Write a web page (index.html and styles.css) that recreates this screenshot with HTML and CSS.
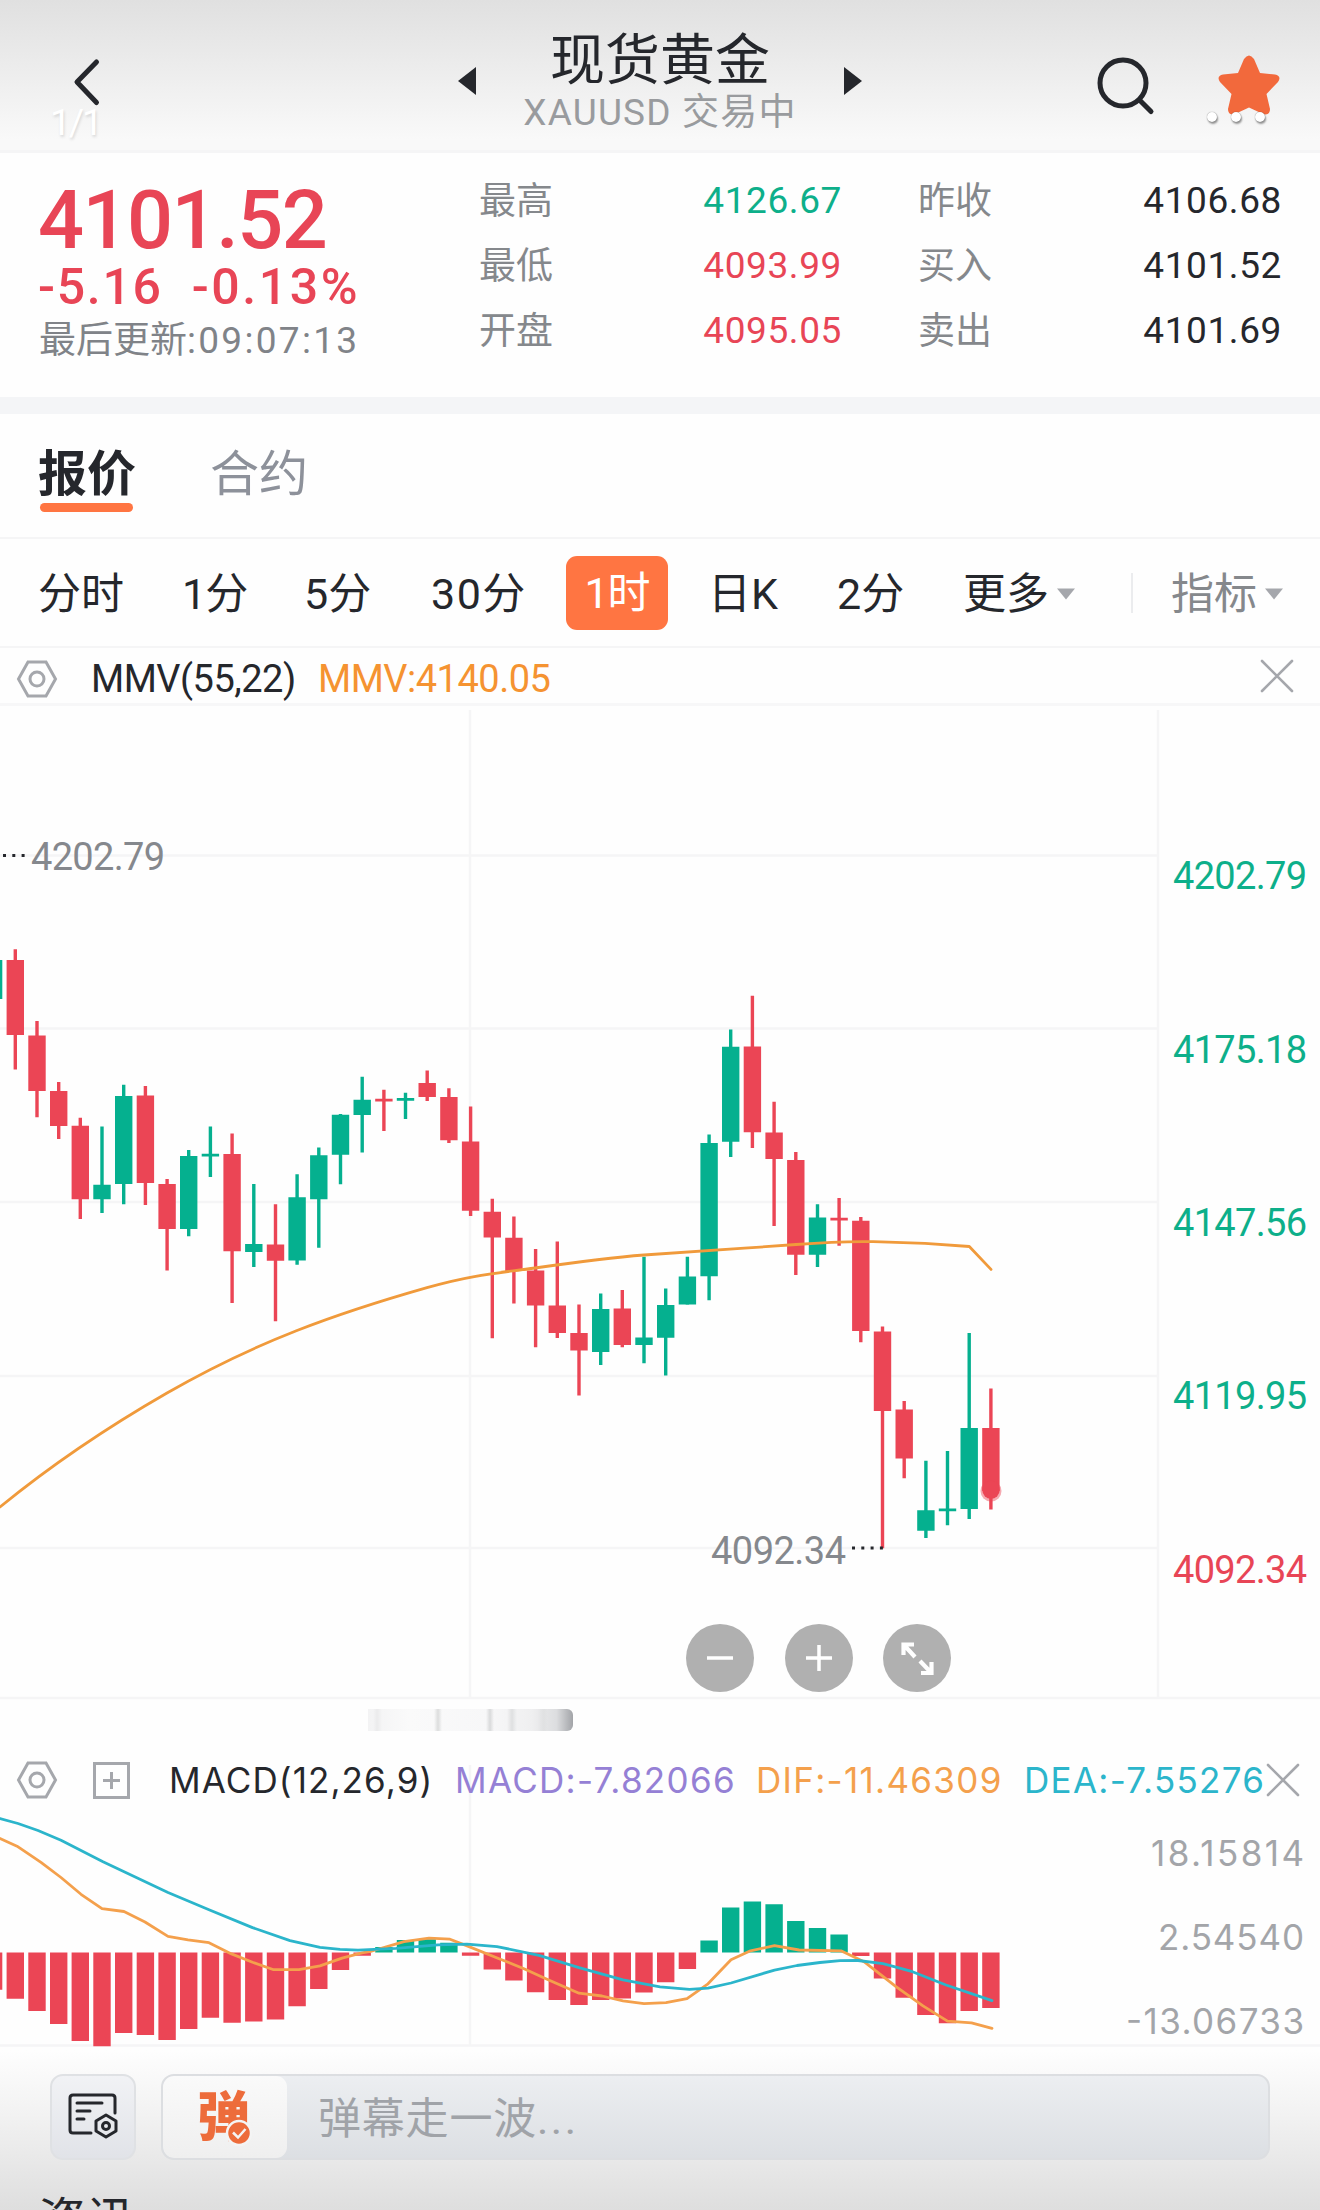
FILE: index.html
```html
<!DOCTYPE html>
<html lang="zh-CN">
<head>
<meta charset="utf-8">
<title>现货黄金 XAUUSD</title>
<link rel="stylesheet" href="styles.css">
</head>
<body>
<div class="page">
  <header class="header">
    <svg class="back" viewBox="0 0 34 60"><path d="M26.500 10L7 30L26.500 50.500"/></svg>
    <div class="instrument">
      <svg class="tri" viewBox="0 0 18 28"><path d="M18 0V28L0 14z"/></svg>
      <div class="names"><h1>现货黄金</h1><p>XAUUSD 交易中</p></div>
      <svg class="tri" viewBox="0 0 18 28"><path d="M0 0V28L18 14z"/></svg>
    </div>
    <div class="tools">
      <svg class="search" viewBox="0 0 60 60"><circle cx="27" cy="27" r="23"/><path d="M43.500 44L55 55.500"/></svg>
      <svg class="star" viewBox="0 0 62 62"><path d="M26 5Q31-2 36 5L42 19L57 20.500Q64 22 60 28L48.500 40L52 55Q52 62 45 60L31 53.500L17 60Q10 62 10 55L13.500 40L2 28Q-2 22 5 20.500L20 19z"/></svg>
    </div>
    <span class="counter">1/1</span>
    <span class="dots"><i></i><i></i><i></i></span>
  </header>

  <section class="quote">
    <div class="last">
      <div class="price">4101.52</div>
      <div class="change"><span>-5.16</span><span class="percent">-0.13%</span></div>
      <div class="updated">最后更新<b>:09:07:13</b></div>
    </div>
    <dl class="stats">
      <dt>最高</dt><dd class="up">4126.67</dd><dt>昨收</dt><dd>4106.68</dd>
      <dt>最低</dt><dd class="down">4093.99</dd><dt>买入</dt><dd>4101.52</dd>
      <dt>开盘</dt><dd class="down">4095.05</dd><dt>卖出</dt><dd>4101.69</dd>
    </dl>
  </section>

  <nav class="tabs"><span class="tab active">报价</span><span class="tab">合约</span></nav>

  <nav class="periods">
    <span class="p1">分时</span><span class="p2">1分</span><span class="p3">5分</span><span class="p4">30分</span>
    <span class="selected">1时</span><span class="p5">日K</span><span class="p6">2分</span>
    <span class="p7">更多<svg class="caret" viewBox="0 0 18 11"><path d="M0 0H18L9 11z"/></svg></span>
    <span class="p8">指标<svg class="caret" viewBox="0 0 18 11"><path d="M0 0H18L9 11z"/></svg></span>
  </nav>

  <div class="indicator">
    <svg class="hex" viewBox="0 0 40 38"><path d="M11 2H29L38.500 19L29 36H11L1.500 19z"/><circle cx="20" cy="19" r="7"/></svg>
    <span class="mmv-name">MMV(55,22)</span><span class="mmv-value">MMV:4140.05</span>
    <svg class="close" viewBox="0 0 32 32"><path d="M1 1L31 31M31 1L1 31"/></svg>
  </div>

  <div class="chart">
    <svg class="plot" viewBox="0 706 1320 994">
      <path class="grid" d="M0 855.500H1158M0 1028.500H1158M0 1202H1158M0 1376H1158M0 1548H1158M470 710V1698M1158 710V1698M0 1698H1320"/>
      <path class="wick g" d="M102 1126.500V1213M123.700 1084.800V1204.200M188.700 1149.900V1236.300M210.400 1126.500V1177M253.800 1183.900V1267M297.100 1174.300V1264.700M318.800 1147.600V1247.800M340.500 1113.900V1184.300M362.200 1076.800V1152.500M405.500 1092.800V1118.900M600.700 1293.600V1365.100M644 1256.800V1363.200M665.700 1288.400V1375.400M687.400 1256.800V1304.600M709.100 1134.600V1300.300M730.700 1029.400V1157.100M817.500 1204.200V1267.100M925.900 1460.800V1537.900M947.500 1450.900V1525.300M969.200 1333.100V1519"/>
      <path class="body g" d="M-6.400 960V999M102 1184.700V1199.200M123.700 1095.900V1183.900M188.700 1156V1229.100M210.400 1153.800V1156.600M253.800 1244V1252M297.100 1197.300V1260.400M318.800 1155.200V1199.200M340.500 1114.700V1154.800M362.200 1099.700V1115M405.500 1098V1100.800M600.700 1309V1352.100M644 1337.500V1345M665.700 1305V1337.800M687.400 1276.600V1304.600M709.100 1142.900V1276.200M730.700 1046.800V1141.700M817.500 1217.600V1254.800M925.900 1510.200V1530.800M947.500 1508.500V1511.300M969.200 1428V1509.100"/>
      <path class="wick r" d="M15.300 949.300V1069.500M37 1020.900V1117.300M58.700 1082.100V1139.100M80.300 1117.700V1219.100M145.400 1086V1205M167.100 1178.900V1270.400M232.100 1133.400V1302.900M275.500 1204.200V1321.300M383.900 1089.800V1131.100M427.200 1070.600V1100.900M448.900 1088.200V1143M470.600 1106.600V1216M492.300 1198.700V1338.200M513.900 1216.500V1303.400M535.600 1248.900V1347.300M557.300 1241.400V1337.900M579 1304.600V1395.600M622.300 1290V1347.300M752.400 995.800V1148.100M774.100 1101.800V1225.900M795.800 1152V1275M839.100 1197.900V1245.700M860.800 1216.900V1342.200M882.500 1326.400V1548.200M904.200 1401.100V1478.200M990.900 1388.500V1509.500"/>
      <path class="body r" d="M15.300 960V1035M37 1035.400V1091M58.700 1091V1126.100M80.300 1125.700V1199.200M145.400 1095.500V1183.100M167.100 1183.900V1229.100M232.100 1154V1251.300M275.500 1244.400V1260.800M383.900 1098.800V1101.600M427.200 1082.900V1097M448.900 1097V1140.300M470.600 1141.400V1210.700M492.300 1211.700V1237.400M513.900 1237.800V1271M535.600 1270.600V1305.400M557.300 1305.400V1333.100M579 1333.100V1350.500M622.300 1308.600V1345M752.400 1046.400V1132.200M774.100 1132.600V1159.100M795.800 1159.900V1254.800M839.100 1217.800V1220.600M860.800 1220.800V1331.100M882.500 1331.500V1411M904.200 1409.400V1458.500M990.900 1428V1491"/>
      <circle class="pulse" cx="991" cy="1491" r="10.500"/><circle class="pulse-core" cx="991" cy="1490" r="8.700"/>
      <path class="line mmv" d="M0 1507C60 1458 120 1420 167 1393S260 1345 297 1330.500S380 1301 427 1287.600S500 1273 535 1268S605 1258 644 1255S745 1248.500 796 1244.500S860 1241.500 881 1241.800L925 1243.300L969.300 1246.500L991 1269.400"/>
      <path class="leader" d="M3 855.500H26M852 1548H884"/>
      <text class="mark" x="31" y="870" textLength="134">4202.79</text>
      <text class="mark" x="711" y="1564" textLength="135">4092.34</text>
      <g class="scale">
        <text x="1173" y="889" textLength="134">4202.79</text><text x="1173" y="1062.500" textLength="134">4175.18</text>
        <text x="1173" y="1236" textLength="134">4147.56</text><text x="1173" y="1409" textLength="134">4119.95</text>
        <text class="low" x="1173" y="1583" textLength="134">4092.34</text>
      </g>
    </svg>
    <div class="zoom-controls">
      <svg viewBox="0 0 68 68"><circle cx="34" cy="34" r="34"/><path d="M21 34H47"/></svg>
      <svg viewBox="0 0 68 68"><circle cx="34" cy="34" r="34"/><path d="M21 34H47M34 21V47"/></svg>
      <svg class="expand" viewBox="0 0 68 68"><circle cx="34" cy="34" r="34"/><path d="M32 33L21 21M20.500 31V20.500H31M37 37L48 48.500M48.500 38V49H38"/></svg>
    </div>
  </div>

  <div class="scrub"><i></i></div>

  <div class="macd-head">
    <svg class="hex" viewBox="0 0 40 38"><path d="M11 2H29L38.500 19L29 36H11L1.500 19z"/><circle cx="20" cy="19" r="7"/></svg>
    <svg class="add" viewBox="0 0 37 37"><path d="M1.500 1.500H35.500V35.500H1.500zM10 18.500H27M18.500 10V27"/></svg>
    <span class="m-name">MACD(12,26,9)</span><span class="m-macd">MACD:-7.82066</span><span class="m-dif">DIF:-11.46309</span><span class="m-dea">DEA:-7.55276</span>
    <svg class="close" viewBox="0 0 32 32"><path d="M1 1L31 31M31 1L1 31"/></svg>
  </div>

  <svg class="macd" viewBox="0 1805 1320 245">
    <path class="grid" d="M470 1765V2045M0 2045.500H1320"/>
    <path class="body r" d="M-6.400 1952.500V1989.700M15.300 1952.500V1998.800M37 1952.500V2011.100M58.700 1952.500V2024.100M80.300 1952.500V2040.900M102 1952.500V2046.200M123.700 1952.500V2032.900M145.400 1952.500V2035M167.100 1952.500V2039.900M188.700 1952.500V2029M210.400 1952.500V2017.800M232.100 1952.500V2022.700M253.800 1952.500V2021.600M275.500 1952.500V2019.500M297.100 1952.500V2006.200M318.800 1952.500V1989M340.500 1952.500V1970M362.200 1952.500V1955.700M470.600 1952.500V1955.700M492.300 1952.500V1969.400M513.900 1952.500V1980.600M535.600 1952.500V1992.200M557.300 1952.500V1999.900M579 1952.500V2005.100M600.700 1952.500V1999.900M622.300 1952.500V1998.500M644 1952.500V1992.500M665.700 1952.500V1982.200M687.400 1952.500V1968.900M860.800 1952.500V1956M882.500 1952.500V1978.600M904.200 1952.500V1997.800M925.900 1952.500V2015.100M947.500 1952.500V2023.200M969.200 1952.500V2011.100M990.900 1952.500V2007.900"/>
    <path class="body g" d="M383.900 1952.500V1947M405.500 1952.500V1940M427.200 1952.500V1939.200M448.900 1952.500V1942.700M709.100 1952.500V1940.400M730.700 1952.500V1907.400M752.400 1952.500V1901.400M774.100 1952.500V1904.200M795.800 1952.500V1921.100M817.500 1952.500V1927.900M839.100 1952.500V1934.400"/>
    <polyline class="line dif" points="0,1838.5 17,1846.2 41,1862.4 61,1877.5 81,1894.3 102,1908.7 124,1911.5 145,1922 168,1936.4 188,1939.9 209,1942.7 231.5,1953.9 252.5,1962.3 273.6,1969.7 299,1969.7 320,1965.9 342,1958.1 362,1952.9 372,1951 404,1941.7 429,1938.1 450,1939.2 469,1946.6 501,1959.5 524,1968.7 547,1979.2 579,1993.2 602,1996 623,2000.9 644,2003.7 666,2002.7 687,1998.6 708,1983.8 731,1959.7 750.5,1950.8 774.5,1945.6 799,1950 841,1950.8 864,1961.7 896,1986.6 923,2005.9 947.5,2021.1 971.5,2022.8 992,2028.4"/>
    <polyline class="line dea" points="0,1818.5 18,1823.5 38,1830.5 61,1840.3 103,1861.7 168,1892.5 209,1909.7 252.5,1927.6 290,1940.6 320,1947.3 340,1949.3 358,1950.1 396,1948.3 438,1944.8 467,1944.1 497,1946.6 539,1955.3 579,1967.6 623,1979.9 660,1986.9 689.5,1989.4 708,1988.2 731,1983 774.5,1970.1 797,1965.5 820,1962.5 840,1960.7 858,1960.5 883,1963.7 912.5,1971.7 946,1985 992,2000.6"/>
    <g class="macd-scale">
      <text x="1151" y="1866" textLength="153">18.15814</text><text x="1158" y="1950" textLength="146">2.54540</text><text x="1126" y="2034" textLength="178">-13.06733</text>
    </g>
  </svg>

  <footer class="footer">
    <div class="composer">
      <div class="panel-button">
        <svg viewBox="0 0 50 46"><path d="M23 40H5Q2 40 2 37V5Q2 2 5 2H44Q47 2 47 5V20"/><path d="M9 10H34M9 18H22M9 26H16"/><path d="M38 22L48 28V38L38 44L28 38V28z"/><circle cx="38" cy="33" r="3.500"/></svg>
      </div>
      <div class="message">
        <div class="toggle"><span>弹</span><svg viewBox="0 0 26 26"><circle cx="13" cy="13" r="12"/><path d="M7 12.500L12 17.500L19.500 9"/></svg></div>
        <span class="placeholder">弹幕走一波<span>...</span></span>
      </div>
    </div>
    <h2>资讯</h2>
  </footer>
</div>
</body>
</html>
```
FILE: styles.css
```css
* { box-sizing: border-box; }
body { margin: 0; font-family: Roboto, "Noto Sans CJK SC", sans-serif; color: #25272c; background: #fff; }
svg { display: block; flex: none; overflow: visible; fill: none; }
.page { width: 1320px; height: 2210px; overflow: hidden; display: flex; flex-direction: column; background: #fefefe; }

.header { position: relative; flex: none; height: 153px; display: grid; grid-template-columns: 430px 460px 430px; background: linear-gradient(#e0e0e0, #f9f9f9 93%); border-bottom: 3px solid #f5f5f6; }
.back { width: 34px; height: 60px; margin: 52px 0 0 70px; stroke: #25272c; stroke-width: 5; stroke-linecap: round; stroke-linejoin: round; }
.instrument { display: flex; justify-content: space-between; padding: 0 28px; }
.tri { width: 18px; height: 28px; margin-top: 67px; fill: #25272c; }
.names { text-align: center; white-space: nowrap; }
.names h1 { margin: 26px 0 0; font-size: 55px; line-height: 68px; font-weight: 400; }
.names p { margin: 0; font-size: 37px; line-height: 38px; font-weight: 400; color: #999b9e; letter-spacing: 1.2px; }
.tools { display: flex; gap: 62px; padding: 56px 0 0 206px; }
.search { width: 60px; height: 60px; stroke: #25272c; stroke-width: 5; stroke-linecap: round; }
.star { width: 62px; height: 62px; margin-top: -2px; fill: #f2693c; }
.counter { position: absolute; left: 50px; top: 101px; color: #fff; font-size: 37px; line-height: 44px; font-weight: 400; letter-spacing: -2px; text-shadow: 1px 2px 3px #0002; }
.dots { position: absolute; left: 1207px; top: 112px; display: flex; gap: 14px; }
.dots i { width: 10px; height: 10px; border-radius: 50%; background: #fff; box-shadow: 1px 2px 2px #0006, 0 0 1px #0008; }

.quote { flex: none; height: 261px; padding: 25px 38px 0 39px; display: flex; border-bottom: 17px solid #f4f5f7; }
.last { width: 440px; color: #e84556; }
.price { font-size: 81px; line-height: 86px; font-weight: 500; letter-spacing: -1.5px; margin-left: -1px; }
.change { display: flex; gap: 29px; font-size: 50px; line-height: 46px; font-weight: 500; margin-left: -1px; letter-spacing: 1.7px; }
.percent { letter-spacing: 2.6px; }
.updated { font-size: 37px; line-height: 46px; color: #808388; margin-top: 8px; white-space: nowrap; }
.updated b { font-weight: 400; letter-spacing: 2.3px; }
.stats { margin: 0; width: 803px; display: grid; grid-template-columns: 122px 241px 76px 1fr; grid-auto-rows: 65px; align-content: start; font-size: 37px; line-height: 46px; }
.stats dt { color: #85888c; margin-right: -80px; padding-top: 1px; }
.stats dt:nth-of-type(even) { padding-left: 76px; }
.stats dd { margin: 0; text-align: right; letter-spacing: .6px; }
.up { color: #0daf8a; }
.down { color: #e84556; }

.tabs { flex: none; height: 125px; display: flex; gap: 74px; padding: 25px 38px 0; border-bottom: 2px solid #f5f5f6; font-size: 49px; line-height: 71px; color: #8d919a; }
.tab { height: 73px; }
.active { position: relative; color: #25272c; font-weight: 700; }
.active::after { content: ""; position: absolute; left: 2px; bottom: 0; width: 93px; height: 9px; border-radius: 5px; background: #ff7542; }

.periods { flex: none; height: 109px; display: flex; align-items: center; padding: 0 38px; border-bottom: 2px solid #f5f5f6; font-size: 43px; line-height: 62px; white-space: nowrap; }
.periods span { flex: none; padding-top: 2px; }
.p1 { width: 144px; } .p2 { width: 122px; letter-spacing: -1px; } .p3 { width: 127px; } .p4 { width: 135px; letter-spacing: 1.5px; }
.periods .selected { width: 102px; height: 74px; padding: 0; border-radius: 11px; background: #ff7542; color: #fff; line-height: 74px; text-align: center; letter-spacing: -1px; }
.p5 { margin-left: 40px; width: 129px; } .p6 { width: 126px; }
.p7, .p8 { display: flex; align-items: center; gap: 8px; }
.p7 { width: 170px; border-right: 2px solid #ebecee; height: 40px; }
.p8 { margin-left: 38px; color: #85888c; }
.caret { width: 18px; height: 12px; margin-top: 1px; fill: #a5a7ac; }

.indicator { flex: none; height: 58px; padding: 0 27px 0 17px; display: flex; align-items: center; border-bottom: 3px solid #f7f7f8; font-size: 38px; letter-spacing: -.5px; white-space: nowrap; }
.indicator span { padding-top: 6px; }
.hex { width: 40px; height: 38px; stroke: #a5a7ac; stroke-width: 3; }
.indicator .hex { margin-top: 6px; }
.mmv-name { margin-left: 34px; width: 227px; }
.mmv-value { color: #f59331; }
.close { width: 32px; height: 32px; margin-left: auto; stroke: #a5a7ac; stroke-width: 2.6; stroke-linecap: round; }

.chart { position: relative; flex: none; height: 994px; }
.plot { width: 1320px; height: 994px; overflow: hidden; }
.grid { stroke: #f5f5f6; stroke-width: 2.5; }
.wick { stroke-width: 3.4; }
.body { stroke-width: 17.4; }
.g { stroke: #05b08f; }
.r { stroke: #eb4555; }
.line { stroke-width: 2.8; stroke-linejoin: round; stroke-linecap: round; }
.mmv { stroke: #f09a3b; }
.leader { stroke: #25272c; stroke-width: 3; stroke-dasharray: 3 6.3; }
.pulse { fill: #eb4555; opacity: .45; }
.pulse-core { fill: #eb4555; }
.plot text { font-size: 38px; }
.mark { fill: #85888d; }
.scale { fill: #0daf8a; }
.scale .low { fill: #e84556; }
.zoom-controls { position: absolute; left: 686px; top: 918px; display: flex; gap: 30.5px; }
.zoom-controls svg { width: 68px; height: 68px; stroke: #fff; stroke-width: 3.5; }
.zoom-controls .expand { stroke-width: 4.2; }
.zoom-controls circle { fill: #b0b0b0; stroke: none; }

.scrub { flex: none; height: 46px; padding: 9px 0 0 368px; }
.scrub i { display: block; width: 205px; height: 22px; border-radius: 0 6px 6px 0; background: linear-gradient(90deg, transparent 5px, #ebebec 9px, transparent 14px 66px, #dcdddd 70px, transparent 74px 118px, #d9dadb 122px, transparent 126px 139px, #dfe0e1 144px, transparent 149px 170px, #e0e1e2 176px, transparent 180px), linear-gradient(90deg, #f3f3f4, #fafafa 20%, #f7f7f8 60%, #efeff0 80%, #dcdddf 92%, #a2a4a8); }

.macd-head { position: relative; z-index: 1; flex: none; height: 68px; padding: 0 21px 0 17px; display: flex; align-items: center; font-family: Inter, sans-serif; font-size: 35px; white-space: nowrap; letter-spacing: 1.3px; }
.add { width: 37px; height: 37px; margin-left: 36px; stroke: #a5a7ac; stroke-width: 3; }
.macd-head span { flex: none; }
.m-name { margin-left: 39px; width: 286px; letter-spacing: 1.1px; }
.m-macd { width: 301px; color: #9580d5; }
.m-dif { width: 268px; color: #f4a04c; }
.m-dea { color: #2bb5cb; }
.macd { flex: none; width: 1320px; height: 245px; margin-top: -9px; }
.dif { stroke: #f4a04c; }
.dea { stroke: #2bb5cb; }
.macd-scale { fill: #a3a5a9; font: 35px Inter, sans-serif; }

.footer { flex: none; height: 160px; padding: 24px 50px 0; background: linear-gradient(#fefefe, #f2f2f2 40%, #dedede); }
.composer { display: flex; justify-content: space-between; height: 86px; }
.panel-button { width: 86px; height: 86px; padding: 17px 16px; border: 2px solid #dfe1e4; border-radius: 13px; background: linear-gradient(#f1f2f5, #e1e3e8); }
.panel-button svg { width: 50px; height: 46px; stroke: #25272c; stroke-width: 3; stroke-linecap: round; stroke-linejoin: round; }
.message { width: 1109px; height: 86px; display: flex; border: 2px solid #dcdee1; border-radius: 13px; background: linear-gradient(#eceef1, #dcdfe3); overflow: hidden; }
.toggle { position: relative; width: 124px; padding-left: 34px; background: linear-gradient(#fafafa, #efefef); border-radius: 11px; color: #ed6c3b; font-size: 53px; line-height: 84px; font-weight: 900; }
.toggle svg { position: absolute; left: 63px; top: 44px; width: 26px; height: 26px; fill: #ed6c3b; stroke: #f4f4f4; stroke-width: 2.5; }
.placeholder { margin-left: 31px; font-size: 43px; line-height: 86px; color: #a0a3a8; letter-spacing: .8px; white-space: nowrap; }
.placeholder span { letter-spacing: 2.5px; }
.footer h2 { margin: 31px 0 0 -12px; font-size: 48px; line-height: 60px; font-weight: 400; }
```
